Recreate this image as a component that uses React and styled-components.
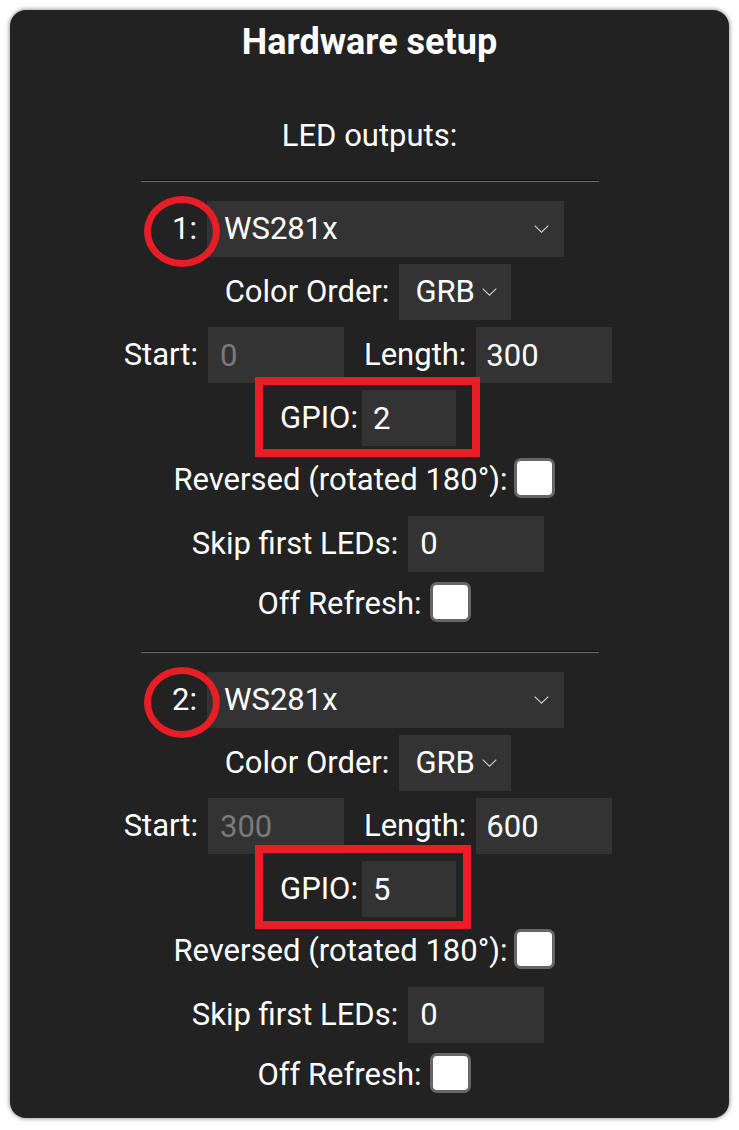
import React from "react";
import styled, { createGlobalStyle } from "styled-components";

const Global = createGlobalStyle`
  html, body { margin: 0; padding: 0; background: #ffffff; }
  * { box-sizing: border-box; }
`;

const FONT = `Roboto, "Liberation Sans", "Noto Sans", sans-serif`;
const RED = "#e81d25";

const Card = styled.main`
  margin: 10px;
  width: 719px;
  height: 1108px;
  padding-top: 12px;
  border-radius: 16px;
  background: #222222;
  box-shadow: 0 0 5px rgba(0, 0, 0, 0.55);
  color: #ffffff;
  font-family: ${FONT};
  display: flex;
  flex-direction: column;
  align-items: center;
  overflow: hidden;
`;

const Title = styled.h1`
  margin: 0;
  font-size: 36px;
  line-height: 40px;
  font-weight: 700;
`;

const Heading = styled.div`
  margin-top: 54px;
  font-size: 31px;
  line-height: 40px;
`;

const Divider = styled.hr`
  width: 458px;
  height: 0;
  margin: ${(p) => p.$top}px 0 15.5px;
  border: none;
  border-top: 1px solid #111111;
  border-bottom: 1px solid #6a6a6a;
`;

const Rows = styled.section`
  width: 100%;
  padding-right: 3px;
  display: flex;
  flex-direction: column;
`;

const Row = styled.div`
  height: ${(p) => p.$h}px;
  display: flex;
  align-items: center;
  justify-content: center;
  gap: ${(p) => p.$gap ?? 10}px;
  font-size: 31px;
  line-height: 40px;
`;

const Label = styled.span`
  position: relative;
  white-space: nowrap;
  margin-left: ${(p) => p.$lead ?? 0}px;
  padding-top: ${(p) => p.$drop ?? 0}px;
`;

const Ring = styled.span`
  position: absolute;
  left: -28px;
  right: -23px;
  top: -13px;
  bottom: -18px;
  border: 7px solid ${RED};
  border-radius: 50%;
  pointer-events: none;
  z-index: 2;
`;

const Group = styled.span`
  position: relative;
  display: flex;
  align-items: center;
  gap: 4px;
`;

const Frame = styled.span`
  position: absolute;
  left: ${(p) => -p.$l}px;
  right: ${(p) => -p.$r}px;
  top: ${(p) => -p.$t}px;
  bottom: ${(p) => -p.$b}px;
  border: 8px solid ${RED};
  pointer-events: none;
  z-index: 2;
`;

const SelectBox = styled.div`
  width: ${(p) => p.$w}px;
  height: 56px;
  padding: 0 ${(p) => p.$pr}px 0 ${(p) => p.$pl}px;
  background: #333333;
  display: flex;
  align-items: center;
  justify-content: space-between;
  font-size: 31px;
`;

const Field = styled.input`
  width: ${(p) => p.$w}px;
  height: 56px;
  padding: 0 0 0 ${(p) => p.$pl ?? 11}px;
  margin: 0;
  border: 0;
  border-radius: 0;
  outline: none;
  background: #333333;
  color: #ffffff;
  font-family: ${FONT};
  font-size: 31px;
  &:disabled {
    color: #7a7a7a;
    -webkit-text-fill-color: #7a7a7a;
    opacity: 1;
  }
`;

const Check = styled.input.attrs({ type: "checkbox" })`
  appearance: none;
  -webkit-appearance: none;
  width: 41px;
  height: 40px;
  margin: 0 8px 0 0;
  background: #ffffff;
  border: 3px solid #666666;
  border-radius: 7px;
`;

const Chevron = () => (
  <svg width="15" height="8" viewBox="0 0 15 8" fill="none" aria-hidden="true">
    <polyline points="0.7,0.7 7.5,7.2 14.3,0.7" stroke="#d0d0d0" strokeWidth="1.1" />
  </svg>
);

function Output({ n, start, length, gpio, hrTop, frame }) {
  return (
    <>
      <Divider $top={hrTop} />
      <Rows>
        <Row $h={63}>
          <Label>
            {n}:
            <Ring />
          </Label>
          <SelectBox $w={357} $pl={17} $pr={15}>
            <span>WS281x</span>
            <Chevron />
          </SelectBox>
        </Row>
        <Row $h={63}>
          <Label>Color Order:</Label>
          <SelectBox $w={112} $pl={16} $pr={14}>
            <span>GRB</span>
            <Chevron />
          </SelectBox>
        </Row>
        <Row $h={63}>
          <Label>Start:</Label>
          <Field $w={136} $pl={12} defaultValue={start} disabled />
          <Label $lead={10}>Length:</Label>
          <Field $w={136} $pl={10} defaultValue={length} />
        </Row>
        <Row $h={63}>
          <Group>
            <Label>GPIO:</Label>
            <Field $w={94} defaultValue={gpio} />
            <Frame $l={frame.l} $r={frame.r} $t={frame.t} $b={frame.b} />
          </Group>
        </Row>
        <Row $h={56} $gap={6}>
          <Label $drop={4}>Reversed (rotated 180°):</Label>
          <Check />
        </Row>
        <Row $h={76}>
          <Label>Skip first LEDs:</Label>
          <Field $w={136} $pl={12} defaultValue="0" />
        </Row>
        <Row $h={40} $gap={8}>
          <Label $drop={4}>Off Refresh:</Label>
          <Check />
        </Row>
      </Rows>
    </>
  );
}

export default function App() {
  return (
    <>
      <Global />
      <Card>
        <Title>Hardware setup</Title>
        <Heading>LED outputs:</Heading>
        <Output n={1} start="0" length="300" gpio="2" hrTop={24} frame={{ l: 25, r: 24, t: 13, b: 11 }} />
        <Output n={2} start="300" length="600" gpio="5" hrTop={29.5} frame={{ l: 25, r: 15, t: 16, b: 12 }} />
      </Card>
    </>
  );
}
